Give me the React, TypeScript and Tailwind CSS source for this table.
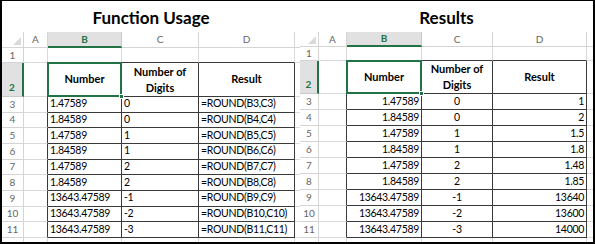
import React from 'react';

type Row = [string, string, string];

const leftRows: Row[] = [
  ['1.47589', '0', '=ROUND(B3,C3)'],
  ['1.84589', '0', '=ROUND(B4,C4)'],
  ['1.47589', '1', '=ROUND(B5,C5)'],
  ['1.84589', '1', '=ROUND(B6,C6)'],
  ['1.47589', '2', '=ROUND(B7,C7)'],
  ['1.84589', '2', '=ROUND(B8,C8)'],
  ['13643.47589', '-1', '=ROUND(B9,C9)'],
  ['13643.47589', '-2', '=ROUND(B10,C10)'],
  ['13643.47589', '-3', '=ROUND(B11,C11)'],
];

const rightRows: Row[] = [
  ['1.47589', '0', '1'],
  ['1.84589', '0', '2'],
  ['1.47589', '1', '1.5'],
  ['1.84589', '1', '1.8'],
  ['1.47589', '2', '1.48'],
  ['1.84589', '2', '1.85'],
  ['13643.47589', '-1', '13640'],
  ['13643.47589', '-2', '13600'],
  ['13643.47589', '-3', '14000'],
];

const grid = 'border-r border-b border-[#dadada]';
const hdr = 'border-r border-b border-[#d4d4d4] bg-white text-[#666] flex items-center justify-center text-[10px]';
const cell = 'border-r border-b border-[#3a3a3a] flex items-center px-[2px] text-[10.5px] tracking-[-0.3px] whitespace-nowrap';

interface SheetProps {
  title: string;
  gridClass: string;
  rows: Row[];
  aligns: [string, string, string];
}

const Sheet: React.FC<SheetProps> = ({ title, gridClass, rows, aligns }) => (
  <div className="flex flex-col h-full">
    <div className="h-[31px] flex items-center justify-center text-[17px] font-bold text-black pt-[2px]">
      {title}
    </div>
    <div className={`grid flex-1 ${gridClass}`}>
      {/* column headers */}
      <div className={`${hdr} items-end justify-end p-[2px]`}>
        <div className="w-0 h-0 border-l-[8px] border-l-transparent border-b-[8px] border-b-[#d9d9d9]" />
      </div>
      <div className={hdr}>A</div>
      <div className="bg-[#e1e1e1] border-r border-[#c8c8c8] border-b-2 border-b-[#217346] flex items-center justify-center text-[10px] font-bold text-[#217346]">B</div>
      <div className={hdr}>C</div>
      <div className={hdr}>D</div>
      <div className="border-b border-[#d4d4d4]" />

      {/* row 1 */}
      <div className={hdr}>1</div>
      <div className={grid} />
      <div className="border-r border-[#dadada] border-b border-b-[#3a3a3a]" />
      <div className="border-r border-[#dadada] border-b border-b-[#3a3a3a]" />
      <div className="border-r border-[#dadada] border-b border-b-[#3a3a3a]" />
      <div className="border-b border-[#dadada]" />

      {/* row 2 */}
      <div className="bg-[#e1e1e1] border-b border-[#c8c8c8] border-r-2 border-r-[#217346] flex items-end justify-center pb-[1px] text-[10px] font-bold text-[#217346]">2</div>
      <div className="border-b border-[#dadada] border-r border-r-[#3a3a3a]" />
      <div className="relative border-r border-b border-[#3a3a3a] flex items-center justify-center font-bold text-[11px]">
        Number
        <div className="absolute -left-px -top-px -right-px -bottom-px border-2 border-[#217346]" />
        <div className="absolute -right-[3px] -bottom-[3px] w-[5px] h-[5px] bg-[#217346] border border-white" />
      </div>
      <div className="border-r border-b border-[#3a3a3a] flex items-center justify-center text-center font-bold text-[11px] leading-[16px]">
        Number of<br />Digits
      </div>
      <div className="border-r border-b border-[#3a3a3a] flex items-center justify-center font-bold text-[11px]">Result</div>
      <div className="border-b border-[#dadada]" />

      {/* data rows */}
      {rows.map((r, i) => (
        <React.Fragment key={i}>
          <div className={hdr}>{i + 3}</div>
          <div className="border-b border-[#dadada] border-r border-r-[#3a3a3a]" />
          <div className={`${cell} ${aligns[0]}`}>{r[0]}</div>
          <div className={`${cell} ${aligns[1]}`}>{r[1]}</div>
          <div className={`${cell} ${aligns[2]}`}>{r[2]}</div>
          <div className="border-b border-[#dadada]" />
        </React.Fragment>
      ))}

      {/* partial row 12 */}
      <div className="border-r border-[#d4d4d4]" />
      <div className="border-r border-[#dadada]" />
      <div className="border-r border-[#dadada]" />
      <div className="border-r border-[#dadada]" />
      <div className="border-r border-[#dadada]" />
      <div />
    </div>
  </div>
);

export default function App() {
  return (
    <div
      className="w-[595px] h-[244px] bg-white border-l-2 border-r-2 border-b-2 border-t border-black flex overflow-hidden text-black"
      style={{ fontFamily: 'Lato, "Open Sans", sans-serif' }}
    >
      <div className="w-[298px] h-full">
        <Sheet
          title="Function Usage"
          gridClass="grid-cols-[22px_24px_74px_77px_96px_1fr] grid-rows-[16px_15px_34px_repeat(9,15.67px)_1fr]"
          rows={leftRows}
          aligns={['justify-start', 'justify-start', 'justify-start']}
        />
      </div>
      <div className="flex-1 h-full">
        <Sheet
          title="Results"
          gridClass="grid-cols-[19px_28px_75px_71px_94px_1fr] grid-rows-[15px_14px_33px_repeat(9,16px)_1fr]"
          rows={rightRows}
          aligns={['justify-end', 'justify-center', 'justify-end']}
        />
      </div>
    </div>
  );
}
